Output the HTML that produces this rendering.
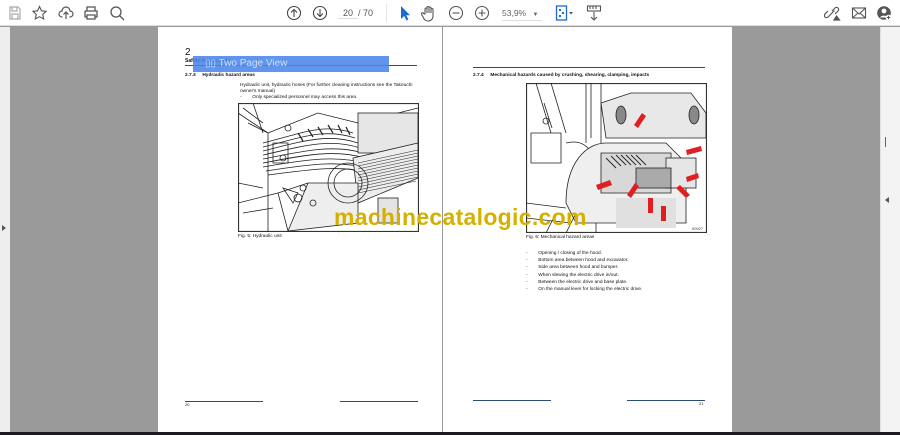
<!DOCTYPE html>
<html><head><meta charset="utf-8"><style>
*{margin:0;padding:0;box-sizing:border-box}
body{width:900px;height:435px;overflow:hidden;background:#9a9a9a;font-family:"Liberation Sans",sans-serif;position:relative}
.tb{position:absolute;left:0;top:0;width:900px;height:26px;background:#fff;border-bottom:1px solid #ddd}
.ic{position:absolute;top:5px}
.lstrip{position:absolute;left:0;top:27px;width:10px;height:405px;background:#eee}
.rs{position:absolute;left:880px;top:27px;width:20px;height:405px;background:#f3f3f3;border-left:1px solid #e0e0e0}
.page{position:absolute;top:27px;height:405px;background:#fff}
.bottom{position:absolute;left:0;top:432px;width:900px;height:3px;background:#1e1a22}
.t{position:absolute;font-size:4.8px;color:#111;white-space:nowrap}
.b{font-weight:bold}
.rule{position:absolute;height:1px;background:#2a4c7a}
.wm{position:absolute;left:334px;top:204px;font-size:23px;font-weight:bold;color:#d4b000;letter-spacing:0.3px}
</style></head><body>
<div class="tb">
<svg class="ic" style="left:7px" width="16" height="16" viewBox="0 0 16 16" fill="none" stroke="#aaa" stroke-width="1.2"><path d="M3 2h8l2 2v10H3z M5 2v4h5V2 M5 9h6v5H5z"/></svg>
<svg class="ic" style="left:31px" width="17" height="16" viewBox="0 0 16 16" fill="none" stroke="#555" stroke-width="1.1"><path d="M8 1.5l2 4.3 4.6.5-3.4 3.1 1 4.6L8 11.7 3.8 14l1-4.6L1.4 6.3 6 5.8z"/></svg>
<svg class="ic" style="left:58px" width="16" height="16" viewBox="0 0 16 16" fill="none" stroke="#555" stroke-width="1.2"><path d="M4.5 12H4a3 3 0 0 1 0-6 4 4 0 0 1 8 0 3 3 0 0 1 0 6h-.5 M8 14V7 M5.5 9.5L8 7l2.5 2.5"/></svg>
<svg class="ic" style="left:83px" width="16" height="16" viewBox="0 0 16 16" fill="none" stroke="#555" stroke-width="1.3"><path d="M4 6V2h8v4 M2 6h12v6h-2 M4 12H2V6 M4 10h8v4H4z"/></svg>
<svg class="ic" style="left:109px" width="16" height="16" viewBox="0 0 16 16" fill="none" stroke="#555" stroke-width="1.3"><circle cx="7" cy="7" r="5"/><path d="M10.5 10.5L15 15"/></svg>
<svg class="ic" style="left:286px" width="16" height="16" viewBox="0 0 16 16" fill="none" stroke="#444" stroke-width="1.1"><circle cx="8" cy="8" r="6.5"/><path d="M8 12V4.5M5 7.5l3-3 3 3"/></svg>
<svg class="ic" style="left:312px" width="16" height="16" viewBox="0 0 16 16" fill="none" stroke="#444" stroke-width="1.1"><circle cx="8" cy="8" r="6.5"/><path d="M8 4v7.5M5 8.5l3 3 3-3"/></svg>
<div style="position:absolute;left:338px;top:8px;font-size:9px;color:#555;width:20px;text-align:center;border-bottom:1px solid #ddd">20</div>
<div style="position:absolute;left:358px;top:8px;font-size:9px;color:#555">/ 70</div>
<div style="position:absolute;left:386px;top:4px;width:1px;height:18px;background:#e5e5e5"></div>
<svg class="ic" style="left:398px" width="14" height="16" viewBox="0 0 14 16"><path d="M3 1v13l3.2-3 2.3 4.5 2-1-2.3-4.3H12z" fill="#1a6bd6"/></svg>
<svg class="ic" style="left:421px" width="16" height="17" viewBox="0 0 16 17" fill="none" stroke="#555" stroke-width="1.1"><path d="M4 9V4a1 1 0 0 1 2 0v4V2.5a1 1 0 0 1 2 0V8V3a1 1 0 0 1 2 0v5V4.5a1 1 0 0 1 2 0V11c0 3-2 5-5 5s-4-2-5-4l-1.5-3a1 1 0 0 1 2-.5z"/></svg>
<svg class="ic" style="left:448px" width="16" height="16" viewBox="0 0 16 16" fill="none" stroke="#555" stroke-width="1.1"><circle cx="8" cy="8" r="6.5"/><path d="M4.5 8h7"/></svg>
<svg class="ic" style="left:474px" width="16" height="16" viewBox="0 0 16 16" fill="none" stroke="#555" stroke-width="1.1"><circle cx="8" cy="8" r="6.5"/><path d="M4.5 8h7M8 4.5v7"/></svg>
<div style="position:absolute;left:502px;top:8px;font-size:8.5px;color:#666;width:40px;border-bottom:1px solid #ddd;padding-bottom:2px">53,9% <span style="margin-left:4px;font-size:6px">▼</span></div>
<svg class="ic" style="left:555px" width="20" height="16" viewBox="0 0 20 16"><rect x="1.5" y="1" width="10" height="14" fill="#fff" stroke="#1a6bd6" stroke-width="1.3"/><rect x="4" y="4" width="2" height="2" fill="#1a6bd6"/><rect x="7" y="7" width="2" height="2" fill="#1a6bd6"/><rect x="4" y="10" width="2" height="2" fill="#1a6bd6"/><path d="M14 7h4l-2 2.5z" fill="#555"/></svg>
<svg class="ic" style="left:586px" width="16" height="17" viewBox="0 0 16 17" fill="none" stroke="#555" stroke-width="1.1"><rect x="1.5" y="1" width="13" height="5"/><path d="M4 1v3M7 1v3M10 1v3M8 7v8M5 12l3 3 3-3"/></svg>
<svg class="ic" style="left:824px" width="17" height="16" viewBox="0 0 17 16" fill="none" stroke="#555" stroke-width="1.2"><path d="M7 9l-3 3a2 2 0 0 1-3-3l3-3M8 6l3-3a2 2 0 0 1 3 3l-3 3M5.5 10.5l5-5"/><path d="M10 15l2.5-4 3 4z" fill="#555"/></svg>
<svg class="ic" style="left:851px" width="16" height="16" viewBox="0 0 16 16" fill="none" stroke="#555" stroke-width="1.1"><rect x="1.5" y="3" width="13" height="10"/><path d="M1.5 3l6.5 6 6.5-6M1.5 13l5-4.5M14.5 13l-5-4.5"/></svg>
<svg class="ic" style="left:876px" width="16" height="16" viewBox="0 0 16 16"><circle cx="8" cy="8" r="6.8" fill="#555"/><circle cx="8" cy="6" r="2.4" fill="#fff"/><path d="M3.8 12.5a5 4 0 0 1 8.4 0" fill="#fff"/><circle cx="12.5" cy="12.5" r="2.8" fill="#fff"/><path d="M12.5 10.8v3.4M10.8 12.5h3.4" stroke="#555" stroke-width="1"/></svg>
</div>
<div class="lstrip"><div style="position:absolute;left:2px;top:198px;width:0;height:0;border-top:3px solid transparent;border-bottom:3px solid transparent;border-left:4px solid #555"></div></div>
<div class="rs">
<div style="position:absolute;left:4px;top:110px;width:1px;height:10px;background:#666"></div>
<div style="position:absolute;top:170px;width:0;height:0;border-top:3px solid transparent;border-bottom:3px solid transparent;border-right:4px solid #555;left:4px"></div>
</div>

<div class="page" style="left:158px;width:284px">
<div class="t" style="left:27px;top:20px;font-size:10px">2</div>
<div class="t b" style="left:27px;top:31px;font-size:5px">Safety instructions</div>
<div class="rule" style="left:27px;top:38px;width:232px"></div>
<div style="position:absolute;left:35px;top:29px;width:196px;height:16px;background:#4a86e8;opacity:.88"></div>
<div style="position:absolute;left:47px;top:31px;font-size:10px;color:#fff;opacity:.7">▯▯ Two Page View</div>
<div class="t b" style="left:27px;top:46px">2.7.3&nbsp;&nbsp;&nbsp;&nbsp;&nbsp;Hydraulic hazard areas</div>
<div class="t" style="left:82px;top:56px">Hydraulic unit, hydraulic hoses (For further cleaning instructions see the Takeuchi</div>
<div class="t" style="left:82px;top:62px">owner's manual)</div>
<div class="t" style="left:82px;top:68px">-&nbsp;&nbsp;&nbsp;&nbsp;&nbsp;&nbsp;&nbsp;&nbsp;Only specialized personnel may access this area.</div>
<svg style="position:absolute;left:80px;top:76px" width="181" height="129" viewBox="0 0 181 129" fill="none" stroke="#222" stroke-width="0.8">
<rect x="0.5" y="0.5" width="180" height="128" stroke="#333" stroke-width="1.2"/>
<path d="M0 10l30 20v99M10 20l20 10M30 30l50-20l40 10l60-15M5 5l20 15M15 0l10 30"/>
<path d="M25 40c40-10 60-20 90-10M25 44c40-10 62-19 92-9M25 48c40-10 65-18 95-8M25 52c40-9 67-17 97-7M25 56c40-8 70-15 100-6M25 60c42-8 72-14 102-5M25 64c45-8 75-12 105-3M28 68c45-7 75-11 103-2M30 72c45-6 75-10 100-2"/>
<path d="M60 30l5 8M70 26l5 8M80 24l5 8M90 22l5 8M100 22l4 8M108 24l4 8" stroke-width="1.2"/>
<rect x="120" y="10" width="60" height="40" fill="#e6e6e6"/>
<path d="M115 55l65-15v35l-60 25z" fill="#ececec"/>
<path d="M120 60l60-13M120 63l60-13M120 66l60-13M120 69l60-13M120 72l60-13M120 75l60-13M120 78l60-13M120 81l60-13M120 84l60-13M120 87l60-13M120 90l58-12" stroke-width="0.5"/>
<path d="M70 80l50 0l0 40l-70 8zM40 90l30-10" fill="#eeeeee"/>
<circle cx="110" cy="80" r="20"/><circle cx="110" cy="80" r="14"/>
<path d="M0 100l40-10l10 38M5 110l30-5M0 80l25 5"/>
<rect x="140" y="95" width="20" height="25" fill="#e4e4e4"/>
<circle cx="50" cy="25" r="3"/><circle cx="45" cy="55" r="3"/><circle cx="60" cy="95" r="4"/><circle cx="75" cy="100" r="3"/><circle cx="65" cy="85" r="3"/>
<path d="M35 40h15v20H35zM45 85l15 5l-5 10z"/>
</svg>
<div class="t" style="left:80px;top:207px">Fig. 5: Hydraulic unit</div>
<div class="rule" style="left:27px;top:374px;width:78px"></div>
<div class="rule" style="left:182px;top:374px;width:78px"></div>
<div class="t" style="left:27px;top:375px;font-size:4px">20</div>
</div>

<div class="page" style="left:443px;width:289px">
<div class="rule" style="left:30px;top:40px;width:232px"></div>
<div class="t b" style="left:30px;top:46px">2.7.4&nbsp;&nbsp;&nbsp;&nbsp;&nbsp;Mechanical hazards caused by crushing, shearing, clamping, impacts</div>
<svg style="position:absolute;left:83px;top:56px" width="181" height="150" viewBox="0 0 181 150" fill="none" stroke="#222" stroke-width="0.8">
<rect x="0.5" y="0.5" width="180" height="149" stroke="#333" stroke-width="1.2"/>
<path d="M10 0l15 50M25 0l15 50M5 50h30v30H5z M40 60c20-5 30 10 30 30v60M18 20l8 25"/>
<circle cx="20" cy="38" r="3"/>
<path d="M60 0v60M75 0v60M65 0v55"/>
<path d="M75 20l30-10h60l15 20v25H80z" fill="#e8e8e8"/>
<ellipse cx="95" cy="32" rx="5" ry="9" fill="#888"/><ellipse cx="168" cy="32" rx="5" ry="9" fill="#888"/>
<path d="M40 120c0-40 20-60 40-60h60l20 20v60H50z" fill="#efefef"/>
<path d="M75 70h70v40H75z" fill="#d8d8d8"/>
<path d="M80 75l10 10M85 73l10 10M90 72l10 10M95 72l10 10M100 72l10 10M105 72l10 10M110 72l10 10" stroke-width="0.9"/>
<rect x="140" y="75" width="30" height="30" fill="#e6e6e6"/>
<rect x="110" y="85" width="35" height="20" fill="#aaa"/>
<rect x="90" y="115" width="60" height="30" fill="#e0e0e0" stroke="none"/>
<path d="M0 120l40 5M0 135l45 5M20 150l10-20M40 150l10-20"/>
<g fill="#e02020" stroke="none">
<path d="M108 42l8-12 4 3-8 12z"/><path d="M175 63l-15 4 1 5 15-4z"/><path d="M70 102l14-5 2 5-14 5z"/>
<path d="M101 112l8-12 4 3-8 12z"/><path d="M122 130l0-15 5 0 0 15z"/><path d="M160 115l-10-10 4-3 10 10z"/>
<path d="M135 138l0-15 5 0 0 15z"/><path d="M172 90l-12 4 1 5 12-4z"/>
</g>
<text x="166" y="147" font-size="4" fill="#333" stroke="none" font-family="Liberation Sans">00027</text>
</svg>
<div class="t" style="left:83px;top:208px">Fig. 6: Mechanical hazard areas</div>
<div class="t" style="left:83px;top:223px;line-height:7.2px">-&nbsp;&nbsp;&nbsp;&nbsp;&nbsp;&nbsp;&nbsp;&nbsp;Opening / closing of the hood.<br>-&nbsp;&nbsp;&nbsp;&nbsp;&nbsp;&nbsp;&nbsp;&nbsp;Bottom area between hood and excavator.<br>-&nbsp;&nbsp;&nbsp;&nbsp;&nbsp;&nbsp;&nbsp;&nbsp;Side area between hood and bumper.<br>-&nbsp;&nbsp;&nbsp;&nbsp;&nbsp;&nbsp;&nbsp;&nbsp;When slewing the electric drive in/out.<br>-&nbsp;&nbsp;&nbsp;&nbsp;&nbsp;&nbsp;&nbsp;&nbsp;Between the electric drive and base plate.<br>-&nbsp;&nbsp;&nbsp;&nbsp;&nbsp;&nbsp;&nbsp;&nbsp;On the manual lever for locking the electric drive.</div>
<div class="rule" style="left:30px;top:373px;width:78px"></div>
<div class="rule" style="left:184px;top:373px;width:78px"></div>
<div class="t" style="left:256px;top:374px;font-size:4px">21</div>
</div>
<div class="wm">machinecatalogic.com</div>
<div class="bottom"></div>
</body></html>
